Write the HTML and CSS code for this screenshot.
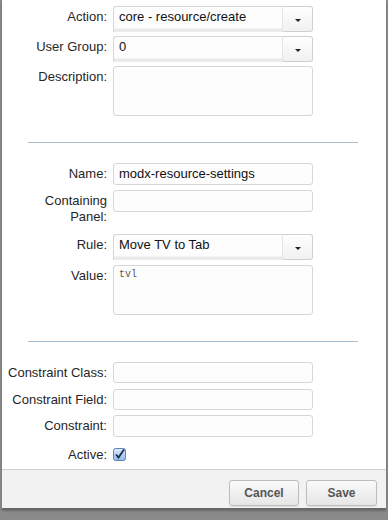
FILE: index.html
```html
<!DOCTYPE html>
<html>
<head>
<meta charset="utf-8">
<link rel="stylesheet" href="styles.css">
</head>
<body>
<div class="panel">
  <div class="form">
    <div class="row first">
      <label class="lbl">Action:</label>
      <div class="select"><div class="sel-text">core - resource/create</div><div class="trigger"><span class="arrow"></span></div></div>
    </div>
    <div class="row gap4">
      <label class="lbl">User Group:</label>
      <div class="select"><div class="sel-text">0</div><div class="trigger"><span class="arrow"></span></div></div>
    </div>
    <div class="row gap4">
      <label class="lbl">Description:</label>
      <div class="field area"></div>
    </div>
    <hr class="sep">
    <div class="row">
      <label class="lbl">Name:</label>
      <div class="field">modx-resource-settings</div>
    </div>
    <div class="row gap5">
      <label class="lbl">Containing<br>Panel:</label>
      <div class="field"></div>
    </div>
    <div class="row gap9">
      <label class="lbl">Rule:</label>
      <div class="select"><div class="sel-text">Move TV to Tab</div><div class="trigger"><span class="arrow"></span></div></div>
    </div>
    <div class="row gap5">
      <label class="lbl">Value:</label>
      <div class="field area mono">tvl</div>
    </div>
    <hr class="sep">
    <div class="row">
      <label class="lbl">Constraint Class:</label>
      <div class="field short"></div>
    </div>
    <div class="row gap6">
      <label class="lbl">Constraint Field:</label>
      <div class="field short"></div>
    </div>
    <div class="row gap5">
      <label class="lbl">Constraint:</label>
      <div class="field"></div>
    </div>
    <div class="row check-row">
      <label class="lbl">Active:</label>
      <svg class="check" width="13" height="13" viewBox="0 0 13 13">
        <defs>
          <linearGradient id="cg" x1="0" y1="0" x2="0" y2="1">
            <stop offset="0" stop-color="#dcebfb"/>
            <stop offset="1" stop-color="#8fb8e6"/>
          </linearGradient>
        </defs>
        <rect x="0.5" y="0.5" width="12" height="12" rx="2" fill="url(#cg)" stroke="#5a86bd"/>
        <path d="M3 6.5 L5.5 9.5 L11 1.5" fill="none" stroke="#1c2d4a" stroke-width="1.8"/>
      </svg>
    </div>
  </div>
  <div class="footer">
    <button class="btn cancel">Cancel</button>
    <button class="btn save">Save</button>
  </div>
</div>
</body>
</html>
```
FILE: styles.css
```css
html, body {
  margin: 0;
  padding: 0;
}
body {
  background: #8a8a8a;
  width: 388px;
  height: 520px;
  overflow: hidden;
  font-family: "Liberation Sans", Arial, sans-serif;
  font-size: 13px;
  color: #262626;
}
.panel {
  margin-left: 2px;
  width: 384px;
  height: 508px;
  background: #fff;
  display: flex;
  flex-direction: column;
  box-shadow: 0 3px 2px rgba(0,0,0,0.25);
}
.form {
  flex: 1;
  padding-top: 6px;
}
.row {
  display: grid;
  grid-template-columns: 105px 200px;
  column-gap: 6px;
  align-items: start;
}
.gap4 { margin-top: 4px; }
.gap5 { margin-top: 5px; }
.gap6 { margin-top: 6px; }
.gap9 { margin-top: 9px; }
.lbl {
  text-align: right;
  line-height: 16px;
  padding-top: 3px;
}
.field {
  height: 22px;
  box-sizing: border-box;
  border: 1px solid #d6d6d6;
  border-radius: 3px;
  background: #fdfdfd;
  padding: 2px 5px 0;
  line-height: 16px;
  color: #111;
}
.field.short { height: 21px; }
.field.area {
  height: 50px;
}
.field.mono {
  font-family: "Liberation Mono", "Courier New", monospace;
  font-size: 10px;
  color: #555;
  padding-top: 1px;
}
.select {
  display: flex;
  height: 26px;
}
.sel-text {
  flex: 1;
  box-sizing: border-box;
  border: 1px solid #d6d6d6;
  border-bottom: none;
  border-right: 1px solid #e4e4e4;
  border-radius: 3px 0 0 0;
  background: linear-gradient(#fdfdfd 0, #fdfdfd 21px, #e9e9e9 22px, #ececec 100%);
  padding: 2px 5px 0;
  line-height: 16px;
  color: #111;
}
.trigger {
  width: 30px;
  box-sizing: border-box;
  border: 1px solid #d0d0d0;
  border-left: none;
  border-radius: 0 3px 3px 0;
  background: linear-gradient(#fefefe, #f1f1f1);
  display: flex;
  align-items: center;
  justify-content: center;
  padding-top: 3px;
}
.arrow {
  width: 0;
  height: 0;
  border-left: 3px solid transparent;
  border-right: 3px solid transparent;
  border-top: 3px solid #222;
}
.sep {
  border: none;
  border-top: 1px solid #a9bfd0;
  margin: 26px 28px 20px 26px;
  height: 0;
}
.check-row {
  margin-top: 10px;
}
.check-row .lbl {
  padding-top: 0;
  line-height: 15px;
}
.check {
  display: block;
  margin-top: 1px;
}
.footer {
  height: 39px;
  border-top: 1px solid #d0d0d0;
  background: #f2f2f2;
  display: flex;
  justify-content: flex-end;
  align-items: flex-start;
  gap: 7px;
  padding: 10px 9px 0 0;
  box-sizing: border-box;
  flex: none;
}
.btn {
  height: 26px;
  border: 1px solid #bdbdbd;
  border-radius: 3px;
  background: linear-gradient(#fafafa, #e6e6e6);
  font-family: "Liberation Sans", Arial, sans-serif;
  font-size: 12px;
  font-weight: bold;
  color: #555;
  padding: 0;
  box-shadow: 0 1px 1px rgba(0,0,0,0.08);
}
.cancel { width: 70px; }
.save { width: 71px; }
```
